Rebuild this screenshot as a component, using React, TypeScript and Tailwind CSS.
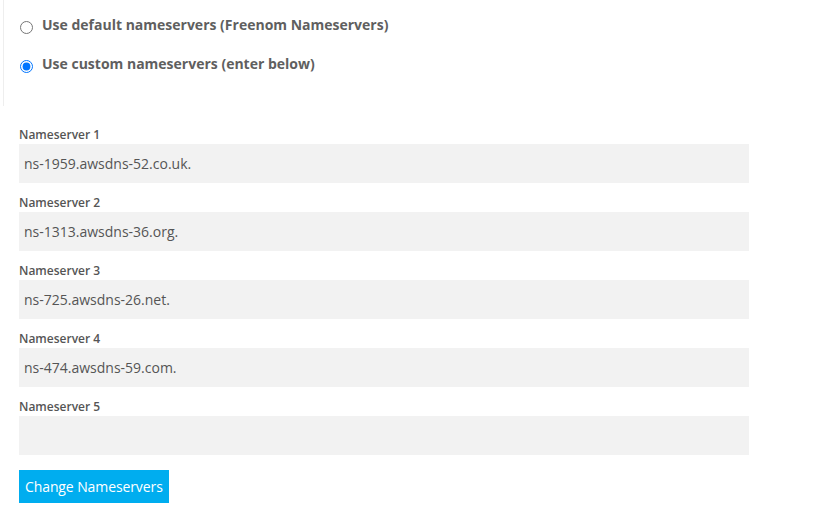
const servers = [
  "ns-1959.awsdns-52.co.uk.",
  "ns-1313.awsdns-36.org.",
  "ns-725.awsdns-26.net.",
  "ns-474.awsdns-59.com.",
  "",
];

export default function App() {
  return (
    <div className="min-h-[525px] w-[827px] bg-white text-[#555] font-['Open_Sans',sans-serif]">
      <div className="ml-[3px] h-[106px] border-l border-[#eee] pl-[16px] pt-[13px]">
        <label className="flex items-center gap-[9px] h-[22px]">
          <input type="radio" name="ns" className="m-0 mt-[6px] h-[13px] w-[13px]" />
          <span className="text-[14px] font-bold text-[#5f5f5f]">Use default nameservers (Freenom Nameservers)</span>
        </label>
        <label className="mt-[17px] flex items-center gap-[9px] h-[22px]">
          <input type="radio" name="ns" defaultChecked className="m-0 mt-[6px] h-[13px] w-[13px]" />
          <span className="text-[14px] font-bold text-[#5f5f5f]">Use custom nameservers (enter below)</span>
        </label>
      </div>
      <div className="pl-[19px] pt-[20px] w-[749px]">
        {servers.map((s, i) => (
          <div key={i} className="mb-[11px]">
            <div className="text-[12px] font-semibold leading-[17px] mb-[1px] text-[#555]">Nameserver {i + 1}</div>
            <input
              defaultValue={s}
              className="block h-[39px] w-[730px] bg-[#f2f2f2] px-[5px] text-[14px] text-[#555] outline-none"
            />
          </div>
        ))}
        <button className="mt-[4px] h-[33px] bg-[#00adef] px-[6px] text-[14px] tracking-[-0.1px] text-white">
          Change Nameservers
        </button>
      </div>
    </div>
  );
}
